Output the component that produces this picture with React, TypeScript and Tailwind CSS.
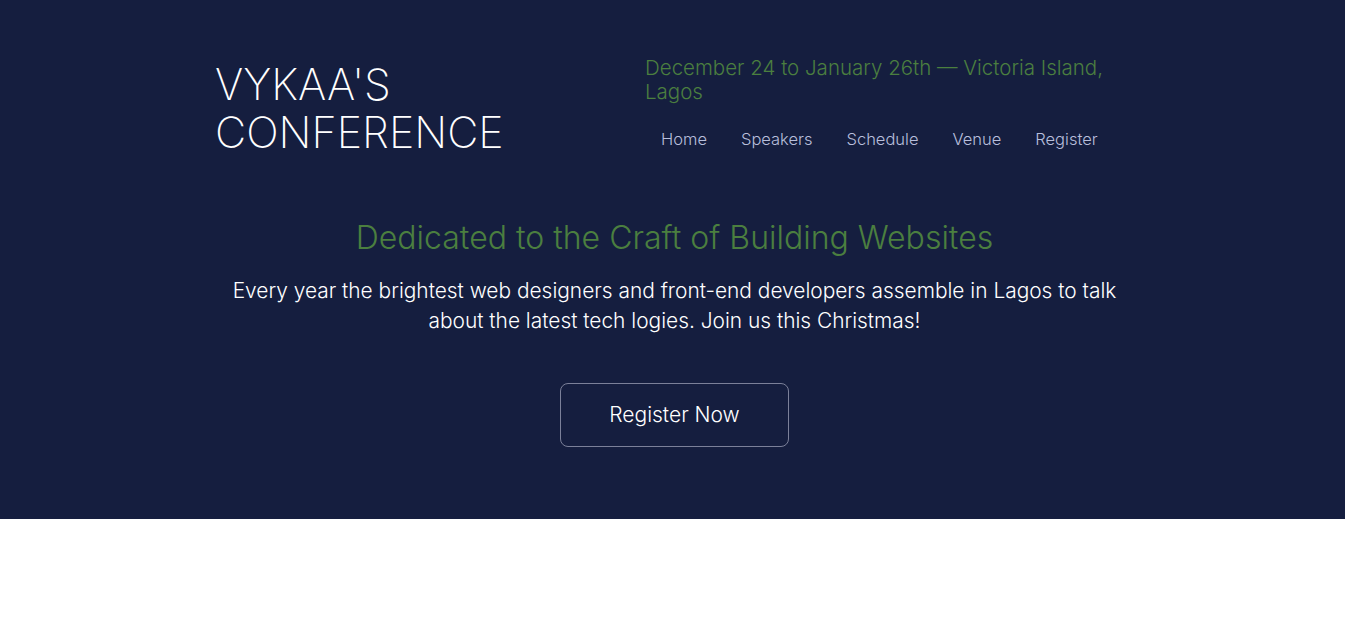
const navLinks = ['Home', 'Speakers', 'Schedule', 'Venue', 'Register']

export default function App() {
  return (
    <div className="font-['Inter',sans-serif] bg-white min-h-screen">
      <section className="bg-[#151e3f] pb-[72px]">
        <div className="w-[915px] mx-auto">
          <header className="flex justify-between pt-[60px]">
            <h1 className="text-[43px] leading-[48px] font-extralight text-white uppercase w-[330px]">
              Vykaa's Conference
            </h1>
            <div className="w-[485px] -mt-1">
              <p className="text-[20.5px] leading-[24px] font-light text-[#4b7f3f]">
                December 24 to January 26th — Victoria Island, Lagos
              </p>
              <nav className="flex mt-[23px]">
                {navLinks.map(link => (
                  <a key={link} href="#" className="px-[17px] first:pl-4 text-[16.5px] leading-[24px] font-light text-[#b8bfdc]">
                    {link}
                  </a>
                ))}
              </nav>
            </div>
          </header>

          <div className="text-center mt-[62px] pl-1">
            <h2 className="text-[32px] leading-[40px] font-light text-[#4b7f3f]">
              Dedicated to the Craft of Building Websites
            </h2>
            <p className="mt-[18px] mx-auto w-[900px] text-[20.9px] leading-[30px] font-light text-white">
              Every year the brightest web designers and front-end developers assemble in Lagos to talk about the latest tech logies. Join us this Christmas!
            </p>
            <a
              href="#"
              className="inline-flex items-center justify-center mt-[47px] w-[229px] h-[64px] rounded-lg border border-[#7b8099] text-[21px] font-light text-white"
            >
              Register Now
            </a>
          </div>
        </div>
      </section>
    </div>
  )
}
